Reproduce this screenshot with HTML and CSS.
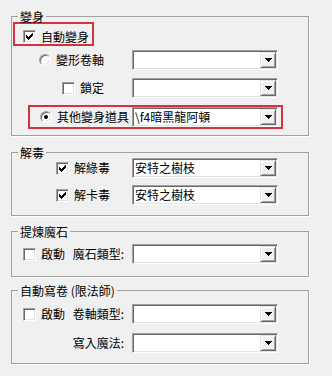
FILE: index.html
```html
<!DOCTYPE html>
<html lang="zh-Hant">
<head>
<meta charset="utf-8">
<title>變身設定</title>
<link rel="stylesheet" href="styles.css">
</head>
<body>
<div class="panel">

  <fieldset class="group g1">
    <legend>變身</legend>
    <div class="mark mark-a">
      <span class="chk"><svg class="tick" width="7" height="7" viewBox="0 0 7 7" shape-rendering="crispEdges"><rect x="6" y="0" width="1" height="1"/><rect x="5" y="1" width="2" height="1"/><rect x="0" y="2" width="1" height="1"/><rect x="4" y="2" width="3" height="1"/><rect x="0" y="3" width="2" height="1"/><rect x="3" y="3" width="3" height="1"/><rect x="0" y="4" width="5" height="1"/><rect x="1" y="5" width="3" height="1"/><rect x="2" y="6" width="1" height="1"/></svg></span>
      <span class="txt">自動變身</span>
    </div>
    <div class="row r-b">
      <div class="lab pl-27"><span class="radio"></span><span class="txt">變形卷軸</span></div>
      <div class="combo"><span class="val"></span><span class="btn"><svg width="7" height="4" viewBox="0 0 7 4" shape-rendering="crispEdges"><rect x="0" y="0" width="7" height="1"/><rect x="1" y="1" width="5" height="1"/><rect x="2" y="2" width="3" height="1"/><rect x="3" y="3" width="1" height="1"/></svg></span></div>
    </div>
    <div class="row r-c">
      <div class="lab pl-50"><span class="chk"></span><span class="txt">鎖定</span></div>
      <div class="combo"><span class="val"></span><span class="btn"><svg width="7" height="4" viewBox="0 0 7 4" shape-rendering="crispEdges"><rect x="0" y="0" width="7" height="1"/><rect x="1" y="1" width="5" height="1"/><rect x="2" y="2" width="3" height="1"/><rect x="3" y="3" width="1" height="1"/></svg></span></div>
    </div>
    <div class="mark mark-d">
      <div class="lab lab-d"><span class="radio on"></span><span class="txt">其他變身道具</span></div>
      <div class="combo"><span class="val">\f4暗黑龍阿頓</span><span class="btn"><svg width="7" height="4" viewBox="0 0 7 4" shape-rendering="crispEdges"><rect x="0" y="0" width="7" height="1"/><rect x="1" y="1" width="5" height="1"/><rect x="2" y="2" width="3" height="1"/><rect x="3" y="3" width="1" height="1"/></svg></span></div>
    </div>
  </fieldset>

  <fieldset class="group g2">
    <legend>解毒</legend>
    <div class="row">
      <div class="lab pl-44"><span class="chk"><svg class="tick" width="7" height="7" viewBox="0 0 7 7" shape-rendering="crispEdges"><rect x="6" y="0" width="1" height="1"/><rect x="5" y="1" width="2" height="1"/><rect x="0" y="2" width="1" height="1"/><rect x="4" y="2" width="3" height="1"/><rect x="0" y="3" width="2" height="1"/><rect x="3" y="3" width="3" height="1"/><rect x="0" y="4" width="5" height="1"/><rect x="1" y="5" width="3" height="1"/><rect x="2" y="6" width="1" height="1"/></svg></span><span class="txt">解綠毒</span></div>
      <div class="combo"><span class="val">安特之樹枝</span><span class="btn"><svg width="7" height="4" viewBox="0 0 7 4" shape-rendering="crispEdges"><rect x="0" y="0" width="7" height="1"/><rect x="1" y="1" width="5" height="1"/><rect x="2" y="2" width="3" height="1"/><rect x="3" y="3" width="1" height="1"/></svg></span></div>
    </div>
    <div class="row r-g2b">
      <div class="lab pl-44"><span class="chk"><svg class="tick" width="7" height="7" viewBox="0 0 7 7" shape-rendering="crispEdges"><rect x="6" y="0" width="1" height="1"/><rect x="5" y="1" width="2" height="1"/><rect x="0" y="2" width="1" height="1"/><rect x="4" y="2" width="3" height="1"/><rect x="0" y="3" width="2" height="1"/><rect x="3" y="3" width="3" height="1"/><rect x="0" y="4" width="5" height="1"/><rect x="1" y="5" width="3" height="1"/><rect x="2" y="6" width="1" height="1"/></svg></span><span class="txt">解卡毒</span></div>
      <div class="combo"><span class="val">安特之樹枝</span><span class="btn"><svg width="7" height="4" viewBox="0 0 7 4" shape-rendering="crispEdges"><rect x="0" y="0" width="7" height="1"/><rect x="1" y="1" width="5" height="1"/><rect x="2" y="2" width="3" height="1"/><rect x="3" y="3" width="1" height="1"/></svg></span></div>
    </div>
  </fieldset>

  <fieldset class="group g3">
    <legend>提煉魔石</legend>
    <div class="row r-g3">
      <div class="lab lab-act"><span class="chk"></span><span class="txt">啟動</span><span class="cap">魔石類型:</span></div>
      <div class="combo"><span class="val"></span><span class="btn"><svg width="7" height="4" viewBox="0 0 7 4" shape-rendering="crispEdges"><rect x="0" y="0" width="7" height="1"/><rect x="1" y="1" width="5" height="1"/><rect x="2" y="2" width="3" height="1"/><rect x="3" y="3" width="1" height="1"/></svg></span></div>
    </div>
  </fieldset>

  <fieldset class="group g4">
    <legend>自動寫卷 (限法師)</legend>
    <div class="row r-g4a">
      <div class="lab lab-act"><span class="chk"></span><span class="txt">啟動</span><span class="cap">卷軸類型:</span></div>
      <div class="combo"><span class="val"></span><span class="btn"><svg width="7" height="4" viewBox="0 0 7 4" shape-rendering="crispEdges"><rect x="0" y="0" width="7" height="1"/><rect x="1" y="1" width="5" height="1"/><rect x="2" y="2" width="3" height="1"/><rect x="3" y="3" width="1" height="1"/></svg></span></div>
    </div>
    <div class="row r-g4b">
      <div class="lab lab-end"><span class="cap">寫入魔法:</span></div>
      <div class="combo"><span class="val"></span><span class="btn"><svg width="7" height="4" viewBox="0 0 7 4" shape-rendering="crispEdges"><rect x="0" y="0" width="7" height="1"/><rect x="1" y="1" width="5" height="1"/><rect x="2" y="2" width="3" height="1"/><rect x="3" y="3" width="1" height="1"/></svg></span></div>
    </div>
  </fieldset>

</div>
</body>
</html>
```

FILE: styles.css
```css
* { box-sizing: border-box; }

html, body {
  margin: 0;
  padding: 0;
  background: #f0f0f0;
}

body {
  font-family: "Noto Sans CJK TC", "Noto Sans CJK SC", "Noto Sans", sans-serif;
  font-size: 12px;
  color: #000;
  width: 332px;
  height: 376px;
  overflow: hidden;
}

.panel {
  padding: 11px 0 0 11px;
}

/* group boxes */
.group {
  width: 298px;
  min-width: 0;
  margin: 0;
  padding: 0;
  border: 1px solid #a0a0a0;
  box-shadow: 1px 1px 0 #fff;
}

.group legend {
  margin-left: 6px;
  padding: 0 2px;
  height: 11px;
  line-height: 11px;
  white-space: nowrap;
}

.g1 { padding-bottom: 6px; }
.g2 { margin-top: 11px; padding-bottom: 10px; }
.g3 { margin-top: 10px; padding-bottom: 12px; }
.g4 { margin-top: 8px; padding-bottom: 10px; }

/* rows */
.row {
  display: flex;
  align-items: center;
  height: 20px;
}

.r-b { margin-top: 4px; }
.r-c { margin-top: 8px; }
.r-g2b { margin-top: 7px; }
.r-g3 { margin-top: 7px; }
.r-g4a { margin-top: 8px; }
.r-g4b { margin-top: 9px; }

.lab {
  width: 120px;
  flex: none;
  display: flex;
  align-items: center;
  height: 20px;
}

.pl-27 { padding-left: 27px; }
.pl-50 { padding-left: 50px; }
.pl-44 { padding-left: 44px; }

.lab-act {
  padding-left: 11px;
  padding-right: 8px;
}

.lab-end {
  padding-right: 8px;
  justify-content: flex-end;
}

.txt {
  margin-left: 5px;
  line-height: 16px;
  white-space: nowrap;
}

.cap {
  margin-left: auto;
  line-height: 16px;
  white-space: nowrap;
}

/* red annotation frames */
.mark {
  border: 2px solid #d4323c;
}

.mark-a {
  display: flex;
  align-items: center;
  width: max-content;
  height: 24px;
  margin-left: 1px;
  padding: 5px 3px 0 8px;
}

.mark-d {
  display: flex;
  align-items: center;
  width: max-content;
  height: 24px;
  margin-top: 7px;
  margin-left: 16px;
  padding-right: 3px;
}

.lab-d {
  width: 102px;
  padding-left: 10px;
}

/* checkbox (classic sunken) */
.chk {
  flex: none;
  width: 13px;
  height: 13px;
  display: flex;
  align-items: center;
  justify-content: center;
  background: #fff;
  border: 1px solid;
  border-color: #a0a0a0 #fff #fff #a0a0a0;
  box-shadow: inset 1px 1px 0 #696969, inset -1px -1px 0 #e3e3e3;
}

.tick { display: block; fill: #000; }

/* radio button */
.radio {
  flex: none;
  position: relative;
  width: 12px;
  height: 12px;
  border-radius: 50%;
  background: #fff;
  border: 1px solid;
  border-color: #a0a0a0 #fff #fff #a0a0a0;
  box-shadow: inset 1px 1px 0 #696969, inset -1px -1px 0 #e3e3e3;
}

.radio.on::after {
  content: "";
  position: absolute;
  left: 3px;
  top: 3px;
  width: 4px;
  height: 4px;
  border-radius: 50%;
  background: #000;
}

/* combobox */
.combo {
  flex: none;
  display: flex;
  width: 146px;
  height: 20px;
  padding: 1px;
  background: #fff;
  border: 1px solid;
  border-color: #a0a0a0 #fff #fff #a0a0a0;
  box-shadow: inset 1px 1px 0 #696969, inset -1px -1px 0 #e3e3e3;
}

.val {
  flex: 1;
  min-width: 0;
  padding-left: 1px;
  line-height: 16px;
  white-space: nowrap;
  overflow: hidden;
}

.btn {
  flex: none;
  width: 16px;
  height: 16px;
  display: flex;
  align-items: center;
  justify-content: center;
  background: #f0f0f0;
  border: 1px solid;
  border-color: #e3e3e3 #696969 #696969 #e3e3e3;
  box-shadow: inset 1px 1px 0 #fff, inset -1px -1px 0 #a0a0a0;
}

.btn svg { display: block; fill: #000; }
```
